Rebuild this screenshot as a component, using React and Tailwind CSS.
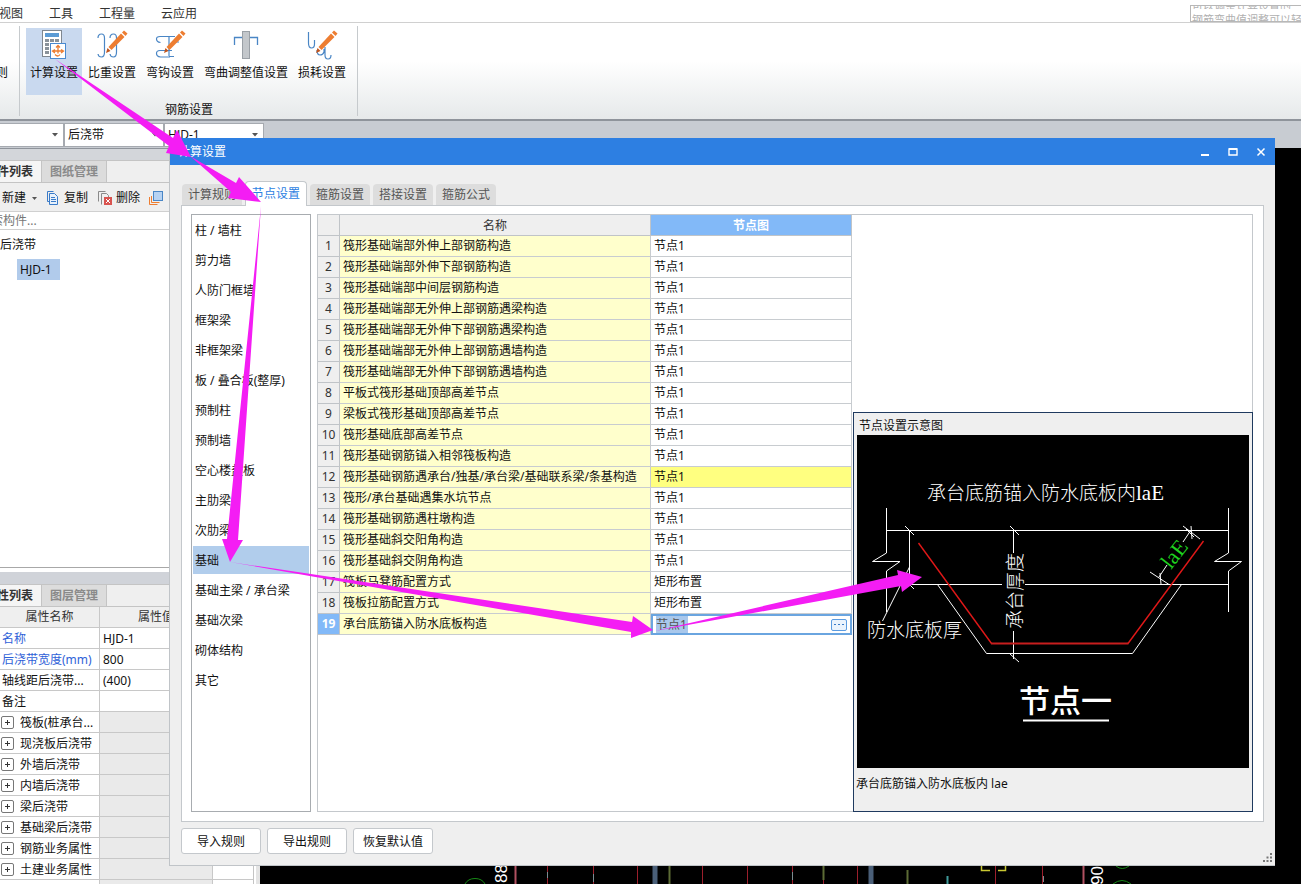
import React from 'react';

const nodeRows = [
  ['筏形基础端部外伸上部钢筋构造', '节点1'],
  ['筏形基础端部外伸下部钢筋构造', '节点1'],
  ['筏形基础端部中间层钢筋构造', '节点1'],
  ['筏形基础端部无外伸上部钢筋遇梁构造', '节点1'],
  ['筏形基础端部无外伸下部钢筋遇梁构造', '节点1'],
  ['筏形基础端部无外伸上部钢筋遇墙构造', '节点1'],
  ['筏形基础端部无外伸下部钢筋遇墙构造', '节点1'],
  ['平板式筏形基础顶部高差节点', '节点1'],
  ['梁板式筏形基础顶部高差节点', '节点1'],
  ['筏形基础底部高差节点', '节点1'],
  ['筏形基础钢筋锚入相邻筏板构造', '节点1'],
  ['筏形基础钢筋遇承台/独基/承台梁/基础联系梁/条基构造', '节点1'],
  ['筏形/承台基础遇集水坑节点', '节点1'],
  ['筏形基础钢筋遇柱墩构造', '节点1'],
  ['筏形基础斜交阳角构造', '节点1'],
  ['筏形基础斜交阴角构造', '节点1'],
  ['筏板马凳筋配置方式', '矩形布置'],
  ['筏板拉筋配置方式', '矩形布置'],
  ['承台底筋锚入防水底板构造', '节点1'],
];

const categories = [
  '柱 / 墙柱', '剪力墙', '人防门框墙', '框架梁', '非框架梁', '板 / 叠合板(整厚)', '预制柱', '预制墙',
  '空心楼盖板', '主肋梁', '次肋梁', '基础', '基础主梁 / 承台梁', '基础次梁', '砌体结构', '其它',
];

const props = [
  ['名称', 'HJD-1', true],
  ['后浇带宽度(mm)', '800', true],
  ['轴线距后浇带...', '(400)', false],
  ['备注', '', false],
];

const groups = ['筏板(桩承台...', '现浇板后浇带', '外墙后浇带', '内墙后浇带', '梁后浇带', '基础梁后浇带', '钢筋业务属性', '土建业务属性', '显示样式'];

function Pencil() {
  return (
    <g>
      <path d="M12.5 18 L25 4.5 L28.5 8 L15.5 21 Z" fill="#ed7d31" />
      <path d="M26 3.5 L28 1.5 L31.5 4.5 L29.5 7 Z" fill="#ed7d31" />
      <path d="M11.5 19 L14.5 22 L10 24 Z" fill="#c0541c" />
    </g>
  );
}

function CalcIcon() {
  return (
    <svg width="32" height="32" viewBox="0 0 32 32">
      <rect x="4.5" y="1.500" width="19" height="26" fill="#fff" stroke="#7f8790" />
      <rect x="7" y="4" width="14" height="4" fill="#5b9bd5" />
      <g fill="#8a929a">
        <rect x="7" y="10" width="4" height="3" /><rect x="12" y="10" width="4" height="3" /><rect x="17" y="10" width="4" height="3" />
        <rect x="7" y="14" width="4" height="3" /><rect x="7" y="18" width="4" height="3" /><rect x="7" y="22" width="4" height="3" />
      </g>
      <rect x="12.500" y="14.500" width="15" height="15" fill="#fff" stroke="#4a8ad0" />
      <path d="M20 16.500 v8 M18 18.500 l2 -2 2 2 M17 20.500 l-2.500 1.500 2.500 2 M23 20.500 l2.500 1.500 -2.500 2 M15 22 h10 M17 25.500 q3 3 5 0" fill="none" stroke="#ed7d31" strokeWidth="1.300" />
    </svg>
  );
}

function WeightIcon() {
  return (
    <svg width="32" height="32" viewBox="0 0 32 32" fill="none" stroke="#4a86c5" strokeWidth="1.200">
      <path d="M2 9 q0 -4 3.500 -4 q3 0 3 4 v14 q0 5 -3 5 q-3 0 -3.500 -3" />
      <path d="M14 9 q0 -4 3.500 -4 q3 0 3 4 v14 q0 5 -3 5 q-3 0 -3.500 -3" />
      <g stroke="none"><Pencil /></g>
    </svg>
  );
}

function HookIcon() {
  return (
    <svg width="32" height="32" viewBox="0 0 32 32" fill="none" stroke="#4a86c5" strokeWidth="1.200">
      <path d="M21 7.500 H6 q-3.500 0 -3.500 2.500 q0 3 4 3.500" />
      <path d="M18 21.500 H6 q-3.500 0 -3.500 3 q0 3 4 3.500 H16" />
      <path d="M15 7.500 V27 M15 27.500 h5 M18 13 h7" />
      <g stroke="none"><Pencil /></g>
    </svg>
  );
}

function BendIcon() {
  return (
    <svg width="32" height="32" viewBox="0 0 32 32" fill="none">
      <path d="M4.500 16 V8.500 H27.500 V16" stroke="#4a86c5" strokeWidth="1.300" />
      <rect x="12.500" y="2.500" width="7" height="27" fill="#c3c7cb" stroke="#9aa0a6" />
    </svg>
  );
}

function LossIcon() {
  return (
    <svg width="32" height="32" viewBox="0 0 32 32" fill="none" stroke="#4a86c5" strokeWidth="1.200">
      <path d="M2.500 3 V14 q0 5 3 5 q3 0 3 -4 V11" />
      <path d="M11 21 q0 5 3 5 q3 0 4 -3 V20 M19 18 V26 q0 4 3 4 q3 0 3 -4" />
      <g stroke="none"><Pencil /></g>
    </svg>
  );
}

function Combo({ label, value, className }) {
  return (
    <div className={'relative h-6 border-[#a6aab0] bg-white ' + className}>
      <select aria-label={label} className="h-full w-full appearance-none bg-transparent pl-[3px] outline-none">
        <option>{value}</option>
      </select>
      <svg className="pointer-events-none absolute right-[5px] top-[9px]" width="6" height="4" viewBox="0 0 6 4">
        <path d="M0 0 H6 L3 3.500 Z" fill="#555" />
      </svg>
    </div>
  );
}

function Ribbon() {
  const tools = [
    ['计算设置', CalcIcon, true],
    ['比重设置', WeightIcon, false],
    ['弯钩设置', HookIcon, false],
    ['弯曲调整值设置', BendIcon, false],
    ['损耗设置', LossIcon, false],
  ];
  return (
    <div className="flex h-[98px] shrink-0 border-b-2 border-[#8f949b] bg-linear-to-b from-white from-40% to-[#e6e9ea]">
      <div className="my-[3px] flex w-5 justify-end overflow-hidden border-r border-[#c6cacd] pr-[11px] pt-[37px] leading-5">
        <span>则</span>
      </div>
      <div className="my-[3px] flex flex-col items-center border-r border-[#c6cacd] pl-[6px] pr-[7px] pt-[2px]">
        <div className="flex gap-[2px]">
          {tools.map(([name, Icon, on]) => (
            <button key={name} className={'flex h-[67px] flex-col items-center px-1 pt-px ' + (on ? 'bg-[#c9d9ef]' : '')}>
              <Icon />
              <span className="mt-[2px] leading-5">{name}</span>
            </button>
          ))}
        </div>
        <div className="mt-[5px] pl-[2px] leading-5">钢筋设置</div>
      </div>
    </div>
  );
}

function PanelTabs({ first, second }) {
  return (
    <div className="flex h-[23px] shrink-0 border-y border-[#c4c4c4] bg-[#efefef] font-bold">
      <button className="flex w-[42px] items-center justify-end overflow-hidden whitespace-nowrap border-r border-[#c4c4c4] bg-[#f5f5f5] pr-2 text-[#333]">{first}</button>
      <button className="border-r border-[#c4c4c4] bg-[#dcdcdc] px-2 text-[#8a8a8a]">{second}</button>
    </div>
  );
}

function LeftPanel() {
  return (
    <div className="flex w-[260px] shrink-0 flex-col overflow-hidden border-r-4 border-[#e4e4e4] bg-white">
      <div className="h-3 shrink-0 border-t border-[#8f949b] bg-[#d3d6da]" />
      <PanelTabs first="构件列表" second="图纸管理" />
      <div className="flex h-7 shrink-0 items-center bg-[#efefef] pl-[2px] pt-[2px]">
        <button className="flex items-center gap-[6px]">新建
          <svg width="5" height="3" viewBox="0 0 5 3"><path d="M0 0 H5 L2.500 3 Z" fill="#555" /></svg>
        </button>
        <button className="ml-[9px] flex items-center gap-1">
          <svg width="14" height="14" viewBox="0 0 14 14" fill="#e8f1fb" stroke="#3a7bc8">
            <path d="M1.500 .5 v10 h2 M1.500 .5 h6" fill="none" />
            <path d="M3.500 2.500 h5 l3 3 v8 h-8 Z M5 6.500 h4 M5 8.500 h5 M5 10.500 h5" />
          </svg>
          复制
        </button>
        <button className="ml-[10px] flex items-center gap-1">
          <svg width="14" height="14" viewBox="0 0 14 14" fill="none" stroke="#8a8a8a">
            <path d="M.5 10.500 V.5 h7 M3.500 13.500 v-11 h5 l2 2 v2" />
            <rect x="6" y="6" width="8" height="8" fill="#d9534f" stroke="none" />
            <path d="M8 8 l4 4 M12 8 l-4 4" stroke="#fff" />
          </svg>
          删除
        </button>
        <button aria-label="层间复制" className="ml-[9px]">
          <svg width="14" height="14" viewBox="0 0 14 14" fill="none">
            <path d="M.5 6 v7.500 h8 M2.500 5 v6.500 h8" stroke="#ed7d31" />
            <rect x="4.500" y=".5" width="9" height="9" fill="#b6d2f2" stroke="#4a86c5" />
          </svg>
        </button>
      </div>
      <input aria-label="搜索构件" placeholder="搜索构件..." className="h-[19px] shrink-0 border-y border-[#d0d0d0] indent-[-21px] outline-none placeholder:text-[#777]" />
      <div className="h-[337px] shrink-0 pt-[5px]">
        <div className="h-6 leading-5">后浇带</div>
        <div className="ml-[17px] inline-block bg-[#b1cbeb] pl-[3px] pr-2 leading-[21px]">HJD-1</div>
      </div>
      <div className="h-[17px] shrink-0 border-t border-[#a8a8a8] bg-[#d0d3d9] shadow-[inset_0_4px_0_#fff]" />
      <PanelTabs first="属性列表" second="图层管理" />
      <table className="w-[254px] table-fixed border-separate border-spacing-0 border-r border-[#c4c4c4]">
        <colgroup><col className="w-[100px]" /><col className="w-[113px]" /><col /></colgroup>
        <thead>
          <tr className="h-[21px] bg-[#efefef] text-[#333]">
            <th className="border-b border-r border-[#c8c8c8] p-0 font-normal">属性名称</th>
            <th className="border-b border-r border-[#c8c8c8] p-0 font-normal">属性值</th>
            <th aria-label="附加" className="border-b border-[#c8c8c8] p-0" />
          </tr>
        </thead>
        <tbody>
          {props.map(([k, v, blue]) => (
            <tr key={k} className="h-[21px]">
              <td className={'whitespace-nowrap border-b border-r border-[#c8c8c8] p-0 pl-[2px] pt-px ' + (blue ? 'text-[#2f62d8]' : '')}>{k}</td>
              <td className="border-b border-r border-[#c8c8c8] p-0 pl-[3px] pt-px">{v}</td>
              <td className="border-b border-[#c8c8c8] p-0" />
            </tr>
          ))}
          {groups.map((g) => (
            <tr key={g} className="h-[21px]">
              <td className="border-b border-r border-[#c8c8c8] p-0 pt-px">
                <div className="flex items-center gap-[6px] whitespace-nowrap pl-px">
                  <svg className="shrink-0" width="13" height="13" viewBox="0 0 13 13" fill="none" stroke="#777">
                    <rect x=".5" y=".5" width="12" height="12" rx="1.500" /><path d="M4 6.500 h5 M6.500 4 v5" stroke="#333" />
                  </svg>
                  {g}
                </div>
              </td>
              <td className="border-b border-r border-[#c8c8c8] bg-[#eaeaea] p-0" />
              <td className="border-b border-[#c8c8c8] p-0" />
            </tr>
          ))}
        </tbody>
      </table>
    </div>
  );
}

function CadStrip() {
  return (
    <svg width="1041" height="18" viewBox="0 0 1041 18" fill="none" className="shrink-0">
      <g stroke="#9c1f2c">
        <path d="M287.500 0 V18 M333.500 0 V18 M377.500 0 V18 M442.500 0 V18 M487.500 0 V18 M532.500 0 V18 M563.500 0 V18 M597.500 0 V18 M735.500 0 V18 M782.500 0 V18" />
        <path d="M255.500 0 V18 M823.500 0 V18" stroke="#b05060" strokeWidth="2" />
      </g>
      <path d="M395 0 V18 M611 0 V18" stroke="#4a5f78" strokeWidth="5" />
      <path d="M409.500 0 V18 M563.500 0 V14 M647.500 4 V18" stroke="#5c6b35" strokeWidth="2" />
      <path d="M287.500 6 V12 M333.500 8 V16 M532.500 6 V14 M783.500 10 V16" stroke="#7d8d92" />
      <path d="M687.500 10 V18" stroke="#3f9a9a" strokeWidth="2" />
      <path d="M721.500 0 V4.500 H730 M738 4.500 H745.500 V0" stroke="#c9c832" strokeWidth="1.500" />
      <path d="M205 18 Q208 12.500 215 12.500 T225 18 M856 0 Q862 5 869 0 M853 18 Q862 11 871 18" stroke="#178a17" />
      <text transform="translate(247 17) rotate(-90)" fill="#fff" fontSize="17" fontFamily="Liberation Sans, sans-serif">88</text>
      <text transform="translate(843 19) rotate(-90)" fill="#fff" fontSize="17" fontFamily="Liberation Sans, sans-serif">90</text>
    </svg>
  );
}

function NodeDrawing() {
  return (
    <svg viewBox="0 0 392 333" className="block w-full bg-black" fill="none" stroke="#fff" strokeWidth="1">
      <path d="M29.500 73 V118 L15.500 126.500 H43 L29.500 136 V177" />
      <path d="M371.500 73 V118 L357.500 126.500 H384.500 L371.500 136 V177" />
      <path d="M29.500 95.500 H371.500 M52.500 95.500 V149.500 M52.500 149.500 H145 M168 149.500 H371.500" />
      <path d="M80.500 149.500 L129.500 218.500 H275.500 L324.500 149.500" />
      <path d="M156.500 95.500 V118 M156.500 196 V224" />
      <path d="M48 91 l9 9 M48 145 l9 9 M153 91 l9 9 M153 219 l9 8" />
      <path d="M52.500 132 L25.500 186" />
      <path d="M326 91 L343 104 M293 137 L312 149.500 M302 142 L310 130 M326 107 L334 95 M303 138 L304 149 M329 94 L337 102 M334 91 L335 104" />
      <path d="M61.500 108 L134.500 208.500" stroke="#e01818" strokeWidth="1.400" />
      <path d="M134 208.500 H271.500" stroke="#c81e1e" strokeWidth="2.200" />
      <path d="M271 208.500 L346.500 106" stroke="#e01818" strokeWidth="1.400" />
      <path d="M166 285.500 H252" strokeWidth="2" />
      <g stroke="none" fill="#fff" fontWeight="300" fontSize="19" fontFamily="'Noto Sans CJK SC', sans-serif">
        <text x="70" y="65">承台底筋锚入防水底板内<tspan fontFamily="Liberation Serif, serif" fontSize="21">laE</tspan></text>
        <text x="10" y="202">防水底板厚</text>
        <text transform="translate(165 194) rotate(-90)">承台厚度</text>
        <text transform="translate(314 135) rotate(-52)" fill="#1fd01f" fontFamily="Liberation Serif, serif" fontSize="22">laE</text>
        <text x="162" y="277" fontSize="31" fontWeight="500">节点一</text>
      </g>
    </svg>
  );
}

function NodeTable() {
  return (
    <table className="w-[534px] shrink-0 table-fixed border-separate border-spacing-0 self-start">
      <colgroup><col className="w-[22px]" /><col className="w-[311px]" /><col /></colgroup>
      <thead>
        <tr className="h-[21px] bg-[#efefef] text-[#333]">
          <th aria-label="序号" className="border-b border-r border-[#c0c4c8] p-0" />
          <th className="border-b border-r border-[#c0c4c8] p-0 pt-px font-normal">名称</th>
          <th className="border-b border-r border-[#c0c4c8] bg-[#82b9f8] p-0 pt-px font-bold text-white">节点图</th>
        </tr>
      </thead>
      <tbody>
        {nodeRows.map(([name, value], i) => {
          const active = i === 18;
          return (
            <tr key={name} className="h-[21px]">
              <th className={'border-b border-r border-[#c0c4c8] p-0 ' + (active ? 'bg-[#82b9f8] font-bold text-white' : 'bg-[#efefef] font-normal text-[#333]')}>{i + 1}</th>
              <td className="whitespace-nowrap border-b border-r border-[#c8ccd0] bg-[#ffffcc] p-0 pl-[3px]">{name}</td>
              {active ? (
                <td className="p-0">
                  <div className="flex h-[21px] items-center justify-between border-2 border-[#6aa5e0] pl-[3px] pr-[3px]">
                    <input aria-label={name} defaultValue={value} className="h-[17px] w-8 bg-[#a9c8ec] text-[#555] outline-none" />
                    <button aria-label="选择节点图" className="flex h-3 w-4 items-center justify-center rounded-xs border border-[#5b9be0] bg-[#eaf3fd]">
                      <svg width="10" height="2" viewBox="0 0 10 2" fill="#3a7bc8"><rect width="2" height="1" x="0" /><rect width="2" height="1" x="4" /><rect width="2" height="1" x="8" /></svg>
                    </button>
                  </div>
                </td>
              ) : (
                <td className={'border-b border-r border-[#c8ccd0] p-0 pl-[3px] ' + (i === 11 ? 'bg-[#ffff80]' : 'bg-white')}>{value}</td>
              )}
            </tr>
          );
        })}
      </tbody>
    </table>
  );
}

function Dialog() {
  const tabs = ['计算规则', '节点设置', '箍筋设置', '搭接设置', '箍筋公式'];
  return (
    <section aria-label="计算设置" className="absolute bottom-[18px] left-[170px] right-[26px] top-[138px] flex flex-col border-b border-[#c0c4c8] bg-[#efefef] shadow-[-1px_0_0_#c0c4c8]">
      <div className="flex h-[27px] shrink-0 items-center justify-between bg-[#2d7fe2] pl-2 pr-[9px] text-white">
        <h1>计算设置</h1>
        <div className="flex gap-[18px]">
          <button aria-label="最小化"><svg width="10" height="10" viewBox="0 0 10 10"><rect x="1" y="7" width="8" height="2" fill="#fff" /></svg></button>
          <button aria-label="最大化"><svg width="10" height="10" viewBox="0 0 10 10"><path d="M1 2 H9 V8 H1 Z" fill="none" stroke="#fff" strokeWidth="1.400" /><path d="M1 2 H9" stroke="#fff" strokeWidth="2" /></svg></button>
          <button aria-label="关闭"><svg width="10" height="10" viewBox="0 0 10 10"><path d="M1.500 1.500 L8.500 8.500 M8.500 1.500 L1.500 8.500" stroke="#fff" strokeWidth="1.500" /></svg></button>
        </div>
      </div>
      <div className="mt-4 flex h-6 shrink-0 items-end gap-[3px] pl-3 pr-3">
        {tabs.map((t, i) =>
          i === 1 ? (
            <button key={t} className="-mb-px h-[25px] rounded-t-sm border border-b-0 border-[#c4c8cc] bg-white px-[6px] text-[#2d7fe2] relative z-10">{t}</button>
          ) : (
            <button key={t} className="h-[21px] rounded-t-sm bg-[#dddddd] px-[6px] pt-px text-[#555]">{t}</button>
          )
        )}
      </div>
      <div className="ml-[11px] mr-[11px] flex min-h-0 flex-1 gap-[6px] border border-[#c4c8cc] bg-white p-[9px] pr-[10px] pt-2">
        <ul className="w-[120px] shrink-0 overflow-hidden border border-[#a8acb0] px-px">
          {categories.map((c) => (
            <li key={c} className="h-[30px] py-px">
              <button className={'block h-7 w-full whitespace-nowrap pl-[2px] pt-[2px] text-left ' + (c === '基础' ? 'bg-[#b1cdec]' : '')}>{c}</button>
            </li>
          ))}
        </ul>
        <div className="flex min-w-0 flex-1 border border-[#c4c8cc]">
          <NodeTable />
          <div className="-mb-px -mr-px flex min-w-0 flex-1 flex-col justify-end pl-px">
            <div className="flex h-[400px] flex-col border border-[#1f3a5f] bg-[#efefef] px-[3px]">
              <h2 className="h-[22px] pl-[2px] leading-[26px]">节点设置示意图</h2>
              <NodeDrawing />
              <p className="-ml-px mt-[6px] leading-5">承台底筋锚入防水底板内 lae</p>
            </div>
          </div>
        </div>
      </div>
      <div className="flex h-[43px] shrink-0 items-start justify-between pl-[11px] pt-[6px]">
        <div className="flex gap-[6px]">
          {['导入规则', '导出规则', '恢复默认值'].map((b) => (
            <button key={b} className="h-[26px] w-20 rounded-[3px] border border-[#c4c8cc] bg-white pt-[2px]">{b}</button>
          ))}
        </div>
        <svg className="mb-[3px] mr-[3px] self-end" width="9" height="9" viewBox="0 0 9 9" fill="#777">
          <path d="M7 0h2v2h-2z M3.500 3.500h2v2h-2z M7 3.500h2v2h-2z M0 7h2v2h-2z M3.500 7h2v2h-2z M7 7h2v2h-2z" />
        </svg>
      </div>
    </section>
  );
}

function Arrows() {
  return (
    <svg className="pointer-events-none absolute left-0 top-0 z-20" width="1301" height="884" viewBox="0 0 1301 884" fill="#f41df4">
      <path d="M55 59 L173 138 L177 130 L191 157 L166 153 L169 146 Z" />
      <path d="M190 156 L236 183 L239 177 L261 202 L228 198 L231 192 Z" />
      <path d="M261 206 L238 540 L243 540 L230 562 L222 539 L227 539 Z" />
      <path d="M230 562 L632 622 L633 616 L653 630 L631 638 L631 632 Z" />
      <path d="M655 631 L898 575 L897 570 L922 577 L902 592 L901 586 Z" />
    </svg>
  );
}

export default function App() {
  return (
    <div className="relative flex h-screen flex-col overflow-hidden bg-white font-['Noto_Sans','Noto_Sans_CJK_SC',sans-serif] text-[12px] leading-[18px] text-[#111]">
      <header className="flex h-[23px] shrink-0 items-center justify-between border-b border-[#d0d0d0]">
        <nav className="-ml-px flex gap-[26px] pt-[6px] text-[#333]">
          {['视图', '工具', '工程量', '云应用'].map((m) => <a key={m} href="#">{m}</a>)}
        </nav>
        <div className="mt-1 flex h-[17px] w-[111px] flex-col justify-between overflow-hidden whitespace-nowrap border border-r-0 border-[#b8b8b8] pl-px text-[11px] text-[#b0b0b0]">
          <div className="h-[3px] overflow-hidden leading-[0px]">可以调整计算设置的</div>
          <div className="h-[7px] overflow-hidden leading-[11px]">钢筋弯曲值调整可以轻</div>
        </div>
      </header>
      <Ribbon />
      <div className="flex h-[27px] shrink-0 bg-[#c8ccd2] pt-[2px]">
        <Combo label="楼层" value="" className="w-16 border border-l-0" />
        <Combo label="构件类型" value="后浇带" className="w-[100px] border" />
        <Combo label="构件" value="HJD-1" className="w-[100px] border" />
      </div>
      <main className="flex min-h-0 flex-1">
        <LeftPanel />
        <div className="flex min-w-0 flex-1 flex-col justify-end overflow-hidden bg-black">
          <CadStrip />
        </div>
      </main>
      <Dialog />
      <Arrows />
    </div>
  );
}
